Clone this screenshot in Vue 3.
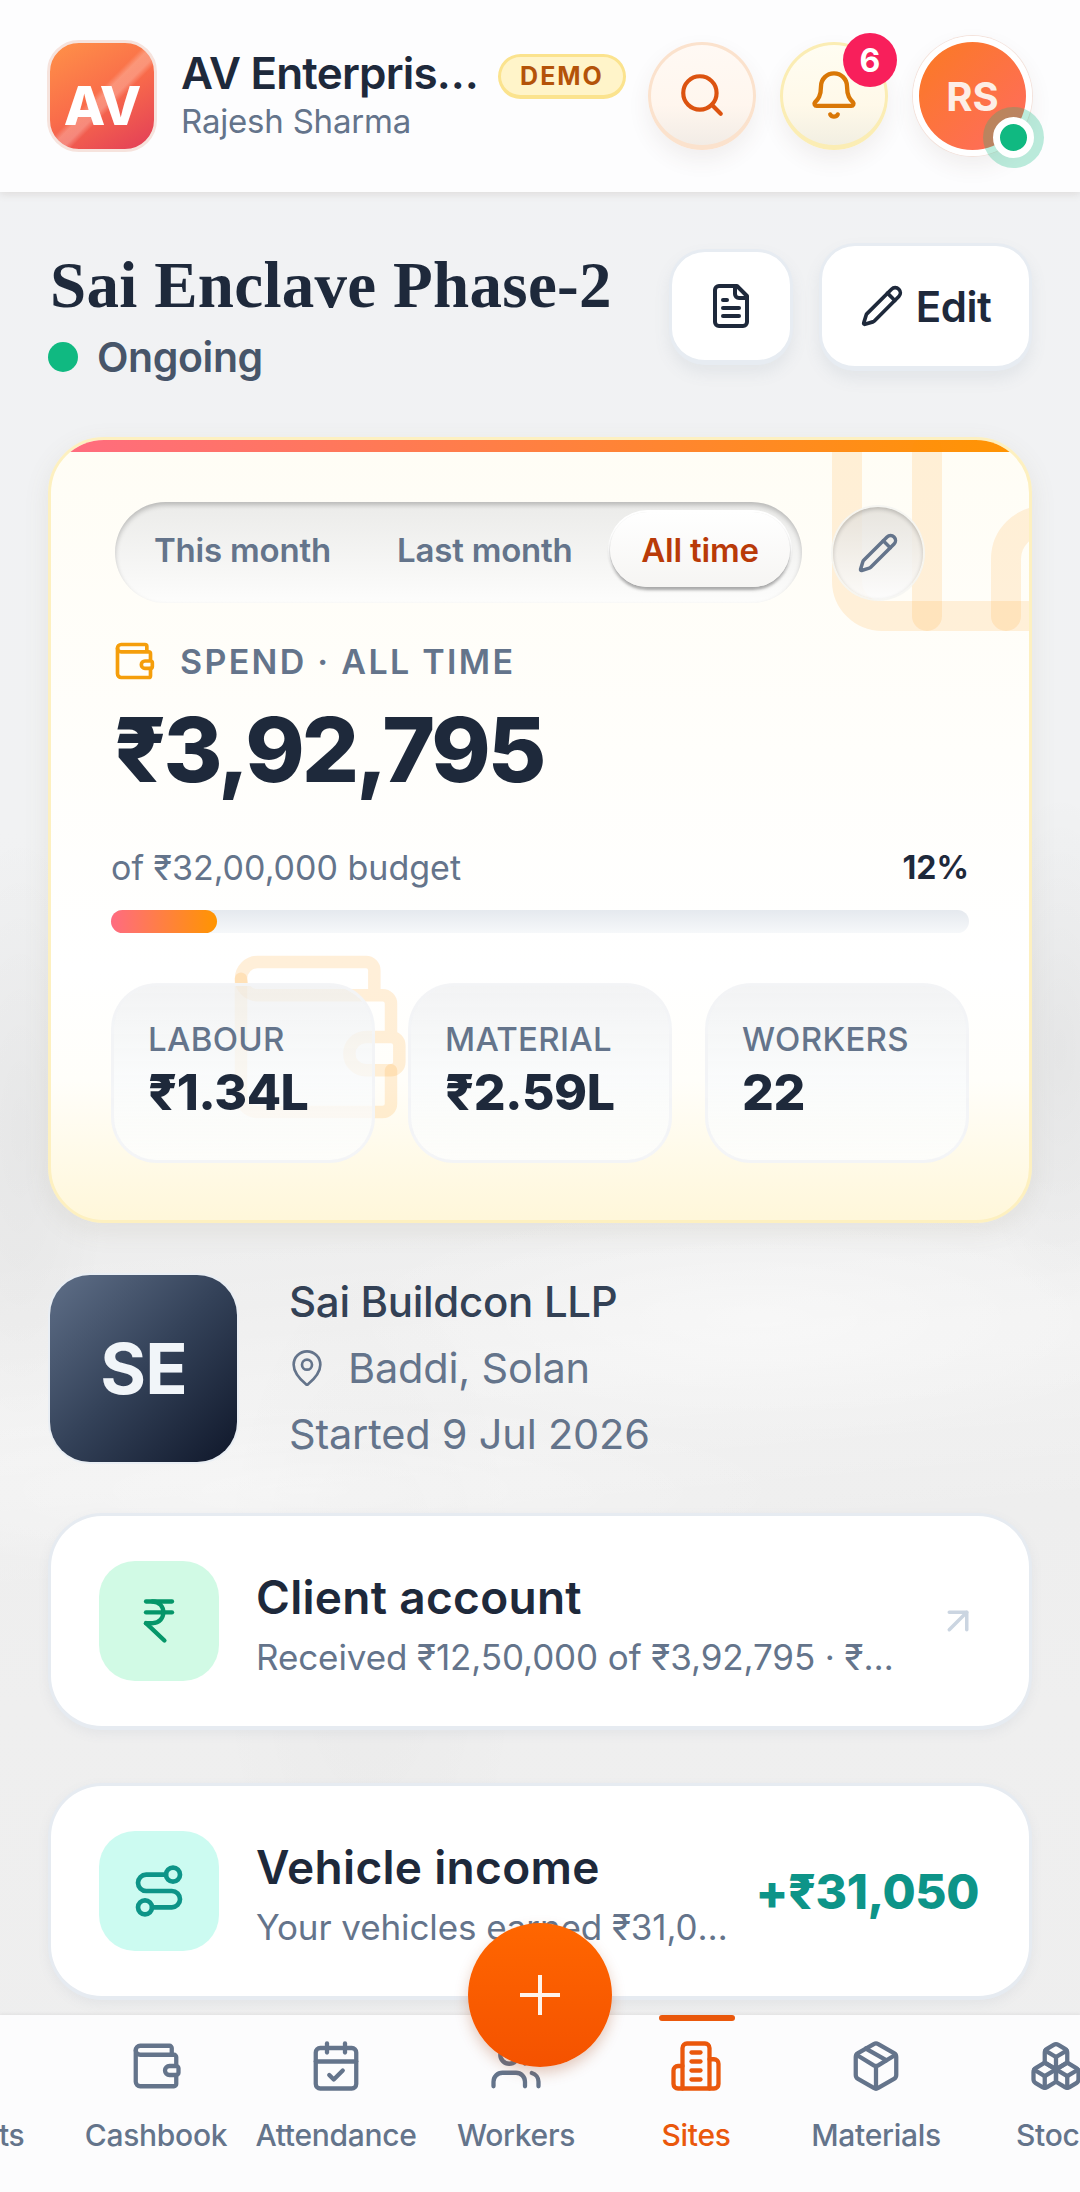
<template>
  <div class="screen">
    <!-- Top bar -->
    <header class="topbar">
      <div class="logo">AV</div>
      <div class="brand">
        <div class="brand-name">AV Enterprises</div>
        <div class="brand-user">Rajesh Sharma</div>
      </div>
      <span class="demo">DEMO</span>
      <button class="round search"><AppIcon name="search" class="ic-search" /></button>
      <button class="round bell">
        <AppIcon name="bell" class="ic-bell" />
        <span class="count">6</span>
      </button>
      <div class="avatar">
        RS
        <span class="online"></span>
      </div>
    </header>

    <main class="content">
      <div class="site-head">
        <div class="site-title">
          <h1>Sai Enclave Phase-2</h1>
          <div class="status"><i></i>Ongoing</div>
        </div>
        <button class="tool doc"><AppIcon name="file" class="ic-doc" /></button>
        <button class="tool edit"><AppIcon name="pencil" class="ic-pen" />Edit</button>
      </div>

      <!-- Spend card -->
      <section class="spend">
        <div class="band"></div>
        <svg class="decor" viewBox="0 0 984 786" fill="none">
          <path d="M799 14V144A35 35 0 0 0 834 179H984" />
          <path d="M879 14V179" stroke-linecap="round" />
          <path d="M958 179V122A38 38 0 0 1 996 84" stroke-linecap="round" />
        </svg>
        <svg class="decor-wallet" viewBox="0 0 24 24" fill="none" stroke-width="1.5" stroke-linecap="round" stroke-linejoin="round">
          <path v-for="d in icons.wallet" :key="d" :d="d" />
        </svg>

        <div class="range-row">
          <div class="range">
            <span v-for="r in ranges" :key="r" class="range-item" :class="{ on: r === 'All time' }">{{ r }}</span>
          </div>
          <button class="range-edit"><AppIcon name="pencil" class="ic-range" /></button>
        </div>

        <div class="spend-label"><AppIcon name="wallet" class="ic-wallet" />SPEND · ALL TIME</div>
        <div class="spend-value">₹3,92,795</div>

        <div class="budget">
          <span>of ₹32,00,000 budget</span>
          <b>12%</b>
        </div>
        <div class="bar"><div class="fill" :style="{ width: spentPct + '%' }"></div></div>

        <div class="tiles">
          <div v-for="t in tiles" :key="t.label" class="tile">
            <div class="tile-label">{{ t.label }}</div>
            <div class="tile-value">{{ t.value }}</div>
          </div>
        </div>
      </section>

      <!-- Site info -->
      <div class="info">
        <div class="initials">SE</div>
        <div class="info-lines">
          <div class="company">Sai Buildcon LLP</div>
          <div class="place"><AppIcon name="pin" class="ic-pin" />Baddi, Solan</div>
          <div class="started">Started 9 Jul 2026</div>
        </div>
      </div>

      <div class="row-card">
        <div class="row-icon mint"><AppIcon name="rupee" class="ic-rupee" /></div>
        <div class="row-text">
          <div class="row-title">Client account</div>
          <div class="row-sub">Received ₹12,50,000 of ₹3,92,795 · ₹8,57,205</div>
        </div>
        <AppIcon name="arrow" class="ic-arrow" />
      </div>

      <div class="row-card">
        <div class="row-icon teal"><AppIcon name="route" class="ic-route" /></div>
        <div class="row-text">
          <div class="row-title">Vehicle income</div>
          <div class="row-sub">Your vehicles earned ₹31,050</div>
        </div>
        <div class="row-amount">+₹31,050</div>
      </div>
    </main>

    <button class="fab">
      <svg viewBox="0 0 40 40" class="ic-plus"><path d="M20 0V40M0 20H40" /></svg>
    </button>

    <!-- Bottom nav -->
    <nav class="tabs">
      <div class="tabs-track">
        <div v-for="tab in tabs" :key="tab.label" class="tab" :class="{ active: tab.label === 'Sites' }">
          <AppIcon :name="tab.icon" class="ic-tab" />
          <span>{{ tab.label }}</span>
        </div>
      </div>
    </nav>
  </div>
</template>

<script setup>
import { h } from 'vue'

const icons = {
  search: ['M21 21l-4.3-4.3', 'M19 11a8 8 0 1 1-16 0 8 8 0 0 1 16 0'],
  bell: ['M10.268 21a2 2 0 0 0 3.464 0', 'M3.262 15.326A1 1 0 0 0 4 17h16a1 1 0 0 0 .74-1.673C19.41 13.956 18 12.499 18 8A6 6 0 0 0 6 8c0 4.499-1.411 5.956-2.738 7.326'],
  file: ['M15 2H6a2 2 0 0 0-2 2v16a2 2 0 0 0 2 2h12a2 2 0 0 0 2-2V7Z', 'M14 2v4a2 2 0 0 0 2 2h4', 'M10 9H8', 'M16 13H8', 'M16 17H8'],
  pencil: ['M21.174 6.812a1 1 0 0 0-3.986-3.987L3.842 16.174a2 2 0 0 0-.5.83l-1.321 4.352a.5.5 0 0 0 .623.622l4.353-1.32a2 2 0 0 0 .83-.497z', 'm15 5 4 4'],
  wallet: ['M19 7V4a1 1 0 0 0-1-1H5a2 2 0 0 0 0 4h15a1 1 0 0 1 1 1v4h-3a2 2 0 0 0 0 4h3a1 1 0 0 0 1-1v-2a1 1 0 0 0-1-1', 'M3 5v14a2 2 0 0 0 2 2h15a1 1 0 0 0 1-1v-4'],
  pin: ['M20 10c0 4.993-5.539 10.193-7.399 11.799a1 1 0 0 1-1.202 0C9.539 20.193 4 14.993 4 10a8 8 0 0 1 16 0', 'M15 10a3 3 0 1 1-6 0 3 3 0 0 1 6 0'],
  rupee: ['M6 3h12', 'M6 8h12', 'm6 13 8.5 8', 'M6 13h3', 'M9 13c6.667 0 6.667-10 0-10'],
  route: ['M9 19a3 3 0 1 1-6 0 3 3 0 0 1 6 0', 'M9 19h8.5a3.5 3.5 0 0 0 0-7h-11a3.5 3.5 0 0 1 0-7H15', 'M21 5a3 3 0 1 1-6 0 3 3 0 0 1 6 0'],
  arrow: ['M7 7h10v10', 'M7 17 17 7'],
  calendar: ['M8 2v4', 'M16 2v4', 'M5 4h14a2 2 0 0 1 2 2v14a2 2 0 0 1-2 2H5a2 2 0 0 1-2-2V6a2 2 0 0 1 2-2z', 'M3 10h18', 'm9 16 2 2 4-4'],
  users: ['M16 21v-2a4 4 0 0 0-4-4H6a4 4 0 0 0-4 4v2', 'M13 7a4 4 0 1 1-8 0 4 4 0 0 1 8 0', 'M22 21v-2a4 4 0 0 0-3-3.87', 'M16 3.13a4 4 0 0 1 0 7.75'],
  building: ['M6 22V4a2 2 0 0 1 2-2h8a2 2 0 0 1 2 2v18Z', 'M6 12H4a2 2 0 0 0-2 2v6a2 2 0 0 0 2 2h2', 'M18 9h2a2 2 0 0 1 2 2v9a2 2 0 0 1-2 2h-2', 'M10 6h4', 'M10 10h4', 'M10 14h4', 'M10 18h4'],
  box: ['M11 21.73a2 2 0 0 0 2 0l7-4A2 2 0 0 0 21 16V8a2 2 0 0 0-1-1.73l-7-4a2 2 0 0 0-2 0l-7 4A2 2 0 0 0 3 8v8a2 2 0 0 0 1 1.73z', 'M12 22V12', 'm3.3 7 7.703 4.734a2 2 0 0 0 1.994 0L20.7 7', 'm7.5 4.27 9 5.15'],
  boxes: ['M2.97 12.92A2 2 0 0 0 2 14.63v3.24a2 2 0 0 0 .97 1.71l3 1.8a2 2 0 0 0 2.06 0L12 19v-5.5l-5-3-4.03 2.42Z', 'm7 16.5-4.74-2.85', 'm7 16.5 5-3', 'M7 16.5v5.17', 'M12 13.5V19l3.97 2.38a2 2 0 0 0 2.06 0l3-1.8a2 2 0 0 0 .97-1.71v-3.24a2 2 0 0 0-.97-1.71L17 10.5l-5 3Z', 'm17 16.5-5-3', 'm17 16.5 4.74-2.85', 'M17 16.5v5.17', 'M7.97 4.42A2 2 0 0 0 7 6.13v4.37l5 3 5-3V6.13a2 2 0 0 0-.97-1.71l-3-1.8a2 2 0 0 0-2.06 0l-3 1.8Z', 'M12 8 7.26 5.15', 'm12 8 4.74-2.85', 'M12 13.5V8']
}

// small helper so every icon is a plain lucide style stroke svg
const AppIcon = (props) => h('svg', {
  viewBox: '0 0 24 24',
  fill: 'none',
  stroke: 'currentColor',
  'stroke-width': 2,
  'stroke-linecap': 'round',
  'stroke-linejoin': 'round'
}, icons[props.name].map((d) => h('path', { d })))
AppIcon.props = ['name']

const ranges = ['This month', 'Last month', 'All time']
const spentPct = 12.3

const tiles = [
  { label: 'LABOUR', value: '₹1.34L' },
  { label: 'MATERIAL', value: '₹2.59L' },
  { label: 'WORKERS', value: '22' }
]

const tabs = [
  { label: 'Clients', icon: 'file' },
  { label: 'Cashbook', icon: 'wallet' },
  { label: 'Attendance', icon: 'calendar' },
  { label: 'Workers', icon: 'users' },
  { label: 'Sites', icon: 'building' },
  { label: 'Materials', icon: 'box' },
  { label: 'Stock', icon: 'boxes' }
]
</script>

<style>
html, body { margin: 0; background: #f1f2f3; }
</style>

<style scoped>
.screen {
  width: 1080px;
  height: 2192px;
  position: relative;
  overflow: hidden;
  display: flex;
  flex-direction: column;
  font-family: Inter, "Noto Sans", sans-serif;
  color: #1e293b;
  /* blurred site photo behind the page */
  background:
    radial-gradient(ellipse 420px 120px at 760px 1320px, rgba(255,255,255,.45), transparent),
    radial-gradient(ellipse 500px 90px at 300px 1490px, rgba(255,255,255,.4), transparent),
    radial-gradient(ellipse 90px 300px at 20px 1130px, rgba(0,0,0,.035), transparent),
    radial-gradient(ellipse 90px 260px at 1060px 1050px, rgba(0,0,0,.045), transparent),
    radial-gradient(ellipse 160px 380px at 370px 1620px, rgba(0,0,0,.02), transparent),
    linear-gradient(175deg, transparent 55%, rgba(255,255,255,.3) 62%, transparent 70%),
    linear-gradient(180deg, #f1f2f4 0%, #f1f2f3 38%, #ededed 60%, #efefef 78%, #eeeeee 100%);
}
button { font-family: inherit; padding: 0; cursor: pointer; }

/* top bar */
.topbar {
  height: 192px;
  box-sizing: border-box;
  flex: none;
  display: flex;
  align-items: center;
  padding: 0 48px 0 47px;
  background: #fdfdfe;
  box-shadow: 0 2px 8px rgba(120, 100, 90, .16);
  position: relative;
  z-index: 3;
}
.logo {
  width: 110px;
  height: 112px;
  flex: none;
  border-radius: 32px;
  border: 3px solid #f6e3dd;
  box-sizing: border-box;
  display: flex;
  align-items: center;
  justify-content: center;
  color: #fff;
  font-size: 54px;
  font-weight: 800;
  letter-spacing: -1px;
  padding-top: 18px;
  background:
    linear-gradient(135deg, transparent 46%, rgba(255,255,255,.26) 50%, rgba(255,255,255,.26) 56%, transparent 60%),
    linear-gradient(150deg, #ff9248, #f96c4a 50%, #e23d58);
}
.brand { width: 300px; flex: none; margin-left: 24px; margin-top: -2px; }
.brand-name {
  font-size: 44px;
  font-weight: 600;
  letter-spacing: -.8px;
  line-height: 52px;
  white-space: nowrap;
  overflow: hidden;
  text-overflow: ellipsis;
}
.brand-user { font-size: 33px; line-height: 44px; color: #64748b; letter-spacing: -.2px; }
.demo {
  width: 128px;
  height: 45px;
  flex: none;
  margin: -40px 0 0 17px;
  box-sizing: border-box;
  border: 3px solid #fbe38e;
  border-bottom-width: 4px;
  border-radius: 24px;
  background: #fff4c9;
  color: #b45309;
  font-size: 25px;
  font-weight: 700;
  letter-spacing: 2px;
  display: flex;
  align-items: center;
  justify-content: center;
}
.round {
  width: 108px;
  height: 108px;
  flex: none;
  border-radius: 50%;
  position: relative;
  display: flex;
  align-items: center;
  justify-content: center;
  box-shadow: 0 10px 22px rgba(90, 70, 50, .08);
}
.search {
  margin-left: 22px;
  border: 3px solid #fbe2cd;
  border-bottom-width: 5px;
  background: linear-gradient(180deg, #fff9f4, #fff6ee 60%, #f2ece6);
}
.bell {
  margin-left: 24px;
  border: 3px solid #fbedb4;
  border-bottom-width: 5px;
  background: linear-gradient(180deg, #fffdf2, #fff9e9 60%, #f2efe2);
}
.ic-search { width: 50px; height: 50px; color: #dc5310; }
.ic-bell { width: 52px; height: 52px; color: #d97706; }
.count {
  position: absolute;
  top: -12px;
  right: -12px;
  width: 54px;
  height: 54px;
  border-radius: 50%;
  background: #f81f5b;
  color: #fff;
  font-size: 32px;
  font-weight: 700;
  display: flex;
  align-items: center;
  justify-content: center;
}
.avatar {
  width: 119px;
  height: 120px;
  flex: none;
  margin-left: 25px;
  box-sizing: border-box;
  border: 6px solid #fff;
  border-radius: 50%;
  position: relative;
  display: flex;
  align-items: center;
  justify-content: center;
  color: #fdeee6;
  font-size: 40px;
  font-weight: 700;
  background: linear-gradient(135deg, #fb7a22, #ff6b62);
  box-shadow: 0 0 0 1px #f4e3dc, 0 10px 22px rgba(90, 70, 50, .08);
}
.online {
  position: absolute;
  right: -8px;
  bottom: -8px;
  width: 27px;
  height: 27px;
  border-radius: 50%;
  background: #10b981;
  border: 7px solid #fff;
  box-shadow: 0 0 0 10px rgba(16, 185, 129, .28);
}

/* page */
.content {
  flex: 1;
  min-height: 0;
  overflow: hidden;
  padding: 0 50px;
  box-sizing: border-box;
  display: flex;
  flex-direction: column;
}
.site-head { display: flex; align-items: flex-start; height: 245px; flex: none; margin-right: -2px; }
.site-title { flex: 1; padding-top: 58px; }
h1 {
  margin: 0;
  font-family: "Liberation Serif", serif;
  font-size: 65px;
  line-height: 70px;
  font-weight: 700;
  letter-spacing: .3px;
  color: #1e293b;
  white-space: nowrap;
}
.status {
  display: flex;
  align-items: center;
  margin: 12px 0 0 -2px;
  font-size: 41px;
  line-height: 50px;
  font-weight: 600;
  color: #475569;
  letter-spacing: -.4px;
}
.status i { width: 30px; height: 30px; border-radius: 50%; background: #10b981; margin-right: 19px; }
.tool {
  background: #fff;
  border: 3px solid #e7ecf2;
  border-bottom-width: 5px;
  border-radius: 36px;
  display: flex;
  align-items: center;
  justify-content: center;
  box-sizing: border-box;
  box-shadow: 0 8px 16px rgba(100, 116, 139, .1);
  color: #1e293b;
}
.doc { width: 124px; height: 116px; margin-top: 57px; }
.ic-doc { width: 48px; height: 48px; }
.edit {
  width: 213px;
  height: 128px;
  margin: 51px 0 0 26px;
  font-size: 42px;
  font-weight: 600;
  letter-spacing: -.5px;
  gap: 12px;
}
.ic-pen { width: 44px; height: 44px; }

/* spend card */
.spend {
  height: 786px;
  flex: none;
  margin: 0 -2px;
  box-sizing: border-box;
  position: relative;
  overflow: hidden;
  border: 3px solid #fdf0c0;
  border-radius: 56px;
  background: linear-gradient(180deg, #fffdf5 0%, #fffefb 40%, #ffffff 68%, #fffefa 82%, #fff7da 100%);
  box-shadow: 0 8px 26px rgba(120, 110, 80, .1);
  padding: 62px 60px 0 60px;
}
.band {
  position: absolute;
  top: 0;
  left: 0;
  right: 0;
  height: 12px;
  background: linear-gradient(90deg, #ff6b81, #ff9500);
}
.decor, .decor-wallet { position: absolute; pointer-events: none; }
.decor { left: -3px; top: -3px; width: 984px; height: 786px; }
.decor path { stroke: rgba(255, 149, 0, .13); stroke-width: 30; }
.decor-wallet { left: 165px; top: 497px; width: 200px; height: 200px; }
.decor-wallet path { stroke: rgba(255, 149, 0, .15); }
.range-row { display: flex; align-items: center; position: relative; height: 101px; }
.range {
  width: 687px;
  height: 101px;
  flex: none;
  margin-left: 4px;
  box-sizing: border-box;
  padding: 10px 12px 0 39px;
  border-radius: 51px;
  display: flex;
  align-items: flex-start;
  font-size: 33px;
  font-weight: 600;
  color: #64748b;
  letter-spacing: -.2px;
  background: linear-gradient(180deg, #ebebe9, #f7f7f6 70%, #fdfdfc);
  box-shadow: inset 0 3px 5px rgba(0, 0, 0, .22);
}
.range-item { height: 75px; display: flex; align-items: center; white-space: nowrap; flex: none; }
.range-item:first-child { margin-right: 66px; }
.range-item.on {
  width: 180px;
  margin-left: auto;
  justify-content: center;
  border-radius: 38px;
  background: linear-gradient(180deg, #fff, #f6f5f3);
  color: #b93a08;
  box-shadow: 0 3px 3px rgba(60, 60, 60, .45), 0 0 0 2px #fff;
}
.range-edit {
  width: 90px;
  height: 92px;
  flex: none;
  margin-left: 31px;
  border: 0;
  border-radius: 50%;
  color: #64748b;
  display: flex;
  align-items: center;
  justify-content: center;
  background: linear-gradient(180deg, rgba(225, 222, 216, .8), rgba(252, 252, 252, .9));
  box-shadow: inset 0 2px 4px rgba(0, 0, 0, .2), 0 0 0 2px rgba(245, 245, 242, .9);
}
.ic-range { width: 42px; height: 42px; }
.spend-label {
  position: relative;
  display: flex;
  align-items: center;
  margin: 36px 0 0 2px;
  height: 44px;
  font-size: 34px;
  font-weight: 600;
  color: #64748b;
  letter-spacing: 2.3px;
}
.ic-wallet { width: 44px; height: 44px; color: #f59e0b; margin: 0 24px 0 -1px; }
.spend-value {
  position: relative;
  margin: 14px 0 0 3px;
  font-size: 90px;
  line-height: 106px;
  font-weight: 800;
  letter-spacing: -3px;
  color: #1e293b;
}
.budget {
  position: relative;
  display: flex;
  justify-content: space-between;
  align-items: center;
  margin-top: 43px;
  font-size: 34px;
  line-height: 44px;
  color: #64748b;
}
.budget b { color: #1e293b; font-weight: 700; font-size: 32px; }
.bar {
  position: relative;
  margin-top: 20px;
  height: 23px;
  border-radius: 12px;
  background: linear-gradient(180deg, #e5e9ee, #f6f8fa);
}
.fill { height: 100%; border-radius: 12px; background: linear-gradient(90deg, #ff6b81, #ff9500); }
.tiles { position: relative; display: flex; gap: 33px; margin-top: 50px; }
.tile {
  flex: 1;
  height: 180px;
  box-sizing: border-box;
  padding: 33px 0 0 34px;
  border: 3px solid rgba(243, 244, 246, .9);
  border-radius: 46px;
  background: linear-gradient(180deg, rgba(238, 239, 240, .72), rgba(248, 250, 252, .75) 55%, rgba(253, 253, 253, .85));
}
.tile-label { font-size: 33px; line-height: 40px; font-weight: 500; color: #64748b; letter-spacing: .3px; white-space: nowrap; }
.tile-value { font-size: 50px; line-height: 56px; font-weight: 800; color: #1e293b; letter-spacing: -.5px; margin-top: 5px; }

/* site info */
.info { display: flex; align-items: center; flex: none; margin-top: 46px; }
.initials {
  width: 187px;
  height: 187px;
  flex: none;
  border-radius: 40px;
  display: flex;
  align-items: center;
  justify-content: center;
  color: #f1f5f9;
  font-size: 70px;
  font-weight: 700;
  letter-spacing: -1px;
  background: linear-gradient(135deg, #5f6f88, #334158 50%, #0f172a);
  box-shadow: 0 0 0 2px #e9eef4;
}
.info-lines { margin-left: 52px; font-size: 41.5px; line-height: 66px; color: #64748b; letter-spacing: -.2px; }
.company { font-size: 42px; color: #334155; font-weight: 500; letter-spacing: -.3px; }
.place { display: flex; align-items: center; }
.ic-pin { width: 40px; height: 40px; margin: 0 21px 0 -2px; stroke-width: 1.6; }

/* list rows */
.row-card {
  height: 217px;
  flex: none;
  box-sizing: border-box;
  margin: 53px -2px 0;
  padding: 0 50px 0 48px;
  display: flex;
  align-items: center;
  background: #fff;
  border: 3px solid #e6ebf1;
  border-bottom-width: 4px;
  border-radius: 54px;
  box-shadow: 0 4px 12px rgba(100, 116, 139, .08);
}
.info + .row-card { margin-top: 46px; }
.row-icon {
  width: 120px;
  height: 120px;
  flex: none;
  border-radius: 36px;
  display: flex;
  align-items: center;
  justify-content: center;
}
.mint { background: #d1fae5; color: #059669; }
.teal { background: #ccfbf1; color: #0d9488; }
.ic-rupee { width: 52px; height: 52px; }
.ic-route { width: 56px; height: 56px; }
.row-text { flex: 1; min-width: 0; margin: 7px 0 0 37px; }
.row-title { font-size: 46px; line-height: 56px; font-weight: 600; letter-spacing: .3px; color: #1e293b; }
.row-sub {
  margin-top: 9px;
  font-size: 35px;
  line-height: 46px;
  color: #64748b;
  letter-spacing: -.1px;
  white-space: nowrap;
  overflow: hidden;
  text-overflow: ellipsis;
}
.ic-arrow { width: 42px; height: 42px; flex: none; color: #cbd5e1; margin-left: 28px; }
.row-amount { flex: none; margin-left: 22px; font-size: 48px; font-weight: 800; color: #0d9488; letter-spacing: -.4px; }

/* fab */
.fab {
  position: absolute;
  left: 468px;
  top: 1923px;
  width: 144px;
  height: 144px;
  border: 0;
  border-radius: 50%;
  z-index: 5;
  display: flex;
  align-items: center;
  justify-content: center;
  background: linear-gradient(180deg, #ff6600, #f45200);
  box-shadow: 0 6px 14px rgba(160, 70, 20, .28);
}
.ic-plus { width: 40px; height: 40px; }
.ic-plus path { stroke: #fff3ea; stroke-width: 4; fill: none; }

/* bottom nav */
.tabs {
  height: 177px;
  flex: none;
  overflow: hidden;
  background: #fcfcfd;
  box-shadow: 0 -1px 3px rgba(120, 120, 120, .12);
  position: relative;
  z-index: 2;
}
.tabs-track { display: flex; margin-left: -114px; width: 1260px; }
.tab {
  width: 180px;
  flex: none;
  display: flex;
  flex-direction: column;
  align-items: center;
  padding-top: 24px;
  box-sizing: border-box;
  position: relative;
  font-size: 30px;
  line-height: 40px;
  font-weight: 500;
  color: #64748b;
  letter-spacing: -.3px;
}
.tab .ic-tab { width: 54px; height: 54px; margin-bottom: 22px; stroke-width: 1.9; }
.tab.active { color: #ea580c; }
.tab.active::before {
  content: '';
  position: absolute;
  top: 0;
  left: 53px;
  width: 76px;
  height: 6px;
  border-radius: 3px;
  background: #ea580c;
}
</style>
